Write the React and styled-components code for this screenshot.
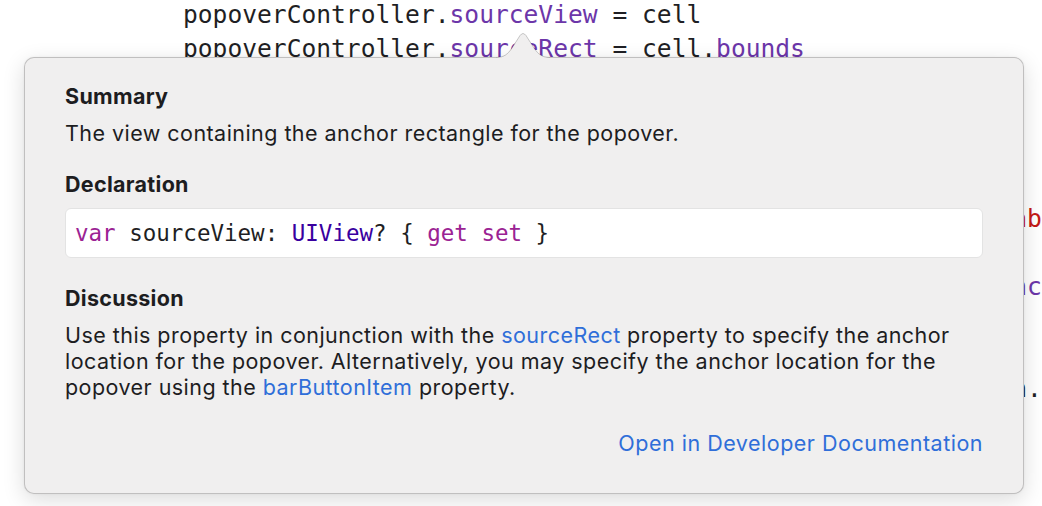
import React from "react";
import styled, { createGlobalStyle } from "styled-components";

const GlobalStyle = createGlobalStyle`
  html, body {
    margin: 0;
    padding: 0;
    background: #ffffff;
    overflow: hidden;
  }
  body {
    width: 1042px;
    height: 506px;
  }
`;

const COLORS = {
  plain: "#1f1f24",
  prop: "#6c36a9",
  type: "#3900a0",
  keyword: "#9b2393",
  string: "#c41a16",
};

// put text at a fixed column; everything before it sits behind the popover
const at = (prefix, col) => prefix.slice(0, col).padEnd(col);

const codeLines = [
  [["popoverController.", "plain"], ["sourceView", "prop"], [" = cell", "plain"]],
  [["popoverController.", "plain"], ["sourceRect", "prop"], [" = cell.", "plain"], ["bounds", "prop"]],
  [["popoverController.", "plain"], ["permittedArrowDirections", "prop"], [" = .up", "plain"]],
  [["", "plain"]],
  [["let", "keyword"], [" detail = DetailViewController()", "plain"]],
  [["detail.", "plain"], ["preferredContentSize", "prop"], [" = size", "plain"]],
  [[at("let controller = storyboard.instantiateViewController(", 54), "plain"], ["\"TableDetail\")", "string"]],
  [["", "plain"]],
  [[at("detail.view.layer.shadowOpacity = 0.2; DispatchQueue.", 53), "plain"], ["async", "prop"], [" {", "plain"]],
  [["", "plain"]],
  [["", "plain"]],
  [[at("self.present(popoverController, animated: true, completio", 56), "plain"], ["n.", "plain"]],
  [["", "plain"]],
  [["}", "plain"]],
];

const App = () => {
  return (
    <>
      <GlobalStyle />
      <Editor>
        {codeLines.map((segs, i) => (
          <CodeLine key={i}>
            {segs.map(([t, c], j) => (
              <Token key={j} $tone={c}>
                {t}
              </Token>
            ))}
          </CodeLine>
        ))}
      </Editor>

      <Popover>
        <Arrow width="60" height="30" viewBox="0 0 60 30">
          <path
            d="M3 26.5 C11 26.5 15 23 19 17 L27 4.5 Q30 0.5 33 4.5 L41 17 C45 23 49 26.5 57 26.5 L57 30 L3 30 Z"
            fill="#f0efef"
          />
          <path
            d="M3 26.5 C11 26.5 15 23 19 17 L27 4.5 Q30 0.5 33 4.5 L41 17 C45 23 49 26.5 57 26.5"
            fill="none"
            stroke="rgba(0,0,0,0.2)"
            strokeWidth="1"
          />
        </Arrow>

        <Section>
          <Title>Summary</Title>
          <Text>The view containing the anchor rectangle for the popover.</Text>
        </Section>

        <Section>
          <Title>Declaration</Title>
          <Declaration>
            <Token $tone="keyword">var</Token>
            <Token $tone="plain"> sourceView: </Token>
            <Token $tone="type">UIView</Token>
            <Token $tone="plain">? {"{"} </Token>
            <Token $tone="keyword">get</Token>
            <Token $tone="plain"> </Token>
            <Token $tone="keyword">set</Token>
            <Token $tone="plain"> {"}"}</Token>
          </Declaration>
        </Section>

        <Section $shift={2}>
          <Title>Discussion</Title>
          <Text>
            Use this property in conjunction with the <Link>sourceRect</Link> property to specify the anchor
            <br />
            location for the popover. Alternatively, you may specify the anchor location for the
            <br />
            popover using the <Link>barButtonItem</Link> property.
          </Text>
        </Section>

        <Footer>
          <Link>Open in Developer Documentation</Link>
        </Footer>
      </Popover>
    </>
  );
};

export default App;

const Editor = styled.div`
  margin-top: -2px;
  padding-left: 183px;
  font-family: "DejaVu Sans Mono", "Liberation Mono", monospace;
  font-size: 24.6px;
  white-space: pre;
`;

const CodeLine = styled.div`
  height: 34px;
  line-height: 34px;
`;

const Token = styled.span`
  color: ${({ $tone }) => COLORS[$tone]};
`;

const Popover = styled.div`
  position: absolute;
  left: 24px;
  top: 57px;
  width: 1000px;
  height: 437px;
  box-sizing: border-box;
  padding: 25px 40px 0;
  background: #f0efef;
  border: 1px solid rgba(0, 0, 0, 0.2);
  border-radius: 10px;
  box-shadow: 0 6px 22px rgba(0, 0, 0, 0.14), 0 0 3px rgba(0, 0, 0, 0.05);
  font-family: Inter, "Noto Sans", sans-serif;
  color: #1d1d1f;
  display: flex;
  flex-direction: column;
  gap: 25px;
`;

const Arrow = styled.svg`
  position: absolute;
  left: 468px;
  top: -27px;
  display: block;
`;

const Section = styled.section`
  display: flex;
  flex-direction: column;
  gap: 11px;
  margin-top: ${({ $shift = 0 }) => $shift}px;
`;

const Title = styled.h3`
  margin: 0;
  font-size: 21.5px;
  line-height: 26px;
  font-weight: 700;
  letter-spacing: 0.3px;
`;

const Text = styled.p`
  margin: 0;
  font-size: 21.5px;
  line-height: 26px;
  font-weight: 400;
  letter-spacing: 0.45px;
  white-space: nowrap;
`;

const Declaration = styled.div`
  height: 50px;
  box-sizing: border-box;
  padding: 0 9px;
  display: flex;
  align-items: center;
  background: #ffffff;
  border: 1px solid #e3e3e3;
  border-radius: 6px;
  font-family: "DejaVu Sans Mono", "Liberation Mono", monospace;
  font-size: 22.5px;
  white-space: pre;
`;

const Link = styled.span`
  color: #2f6ed9;
`;

const Footer = styled.div`
  display: flex;
  justify-content: flex-end;
  margin-top: 5px;
  font-size: 21.5px;
  line-height: 26px;
  letter-spacing: 0.5px;
`;
